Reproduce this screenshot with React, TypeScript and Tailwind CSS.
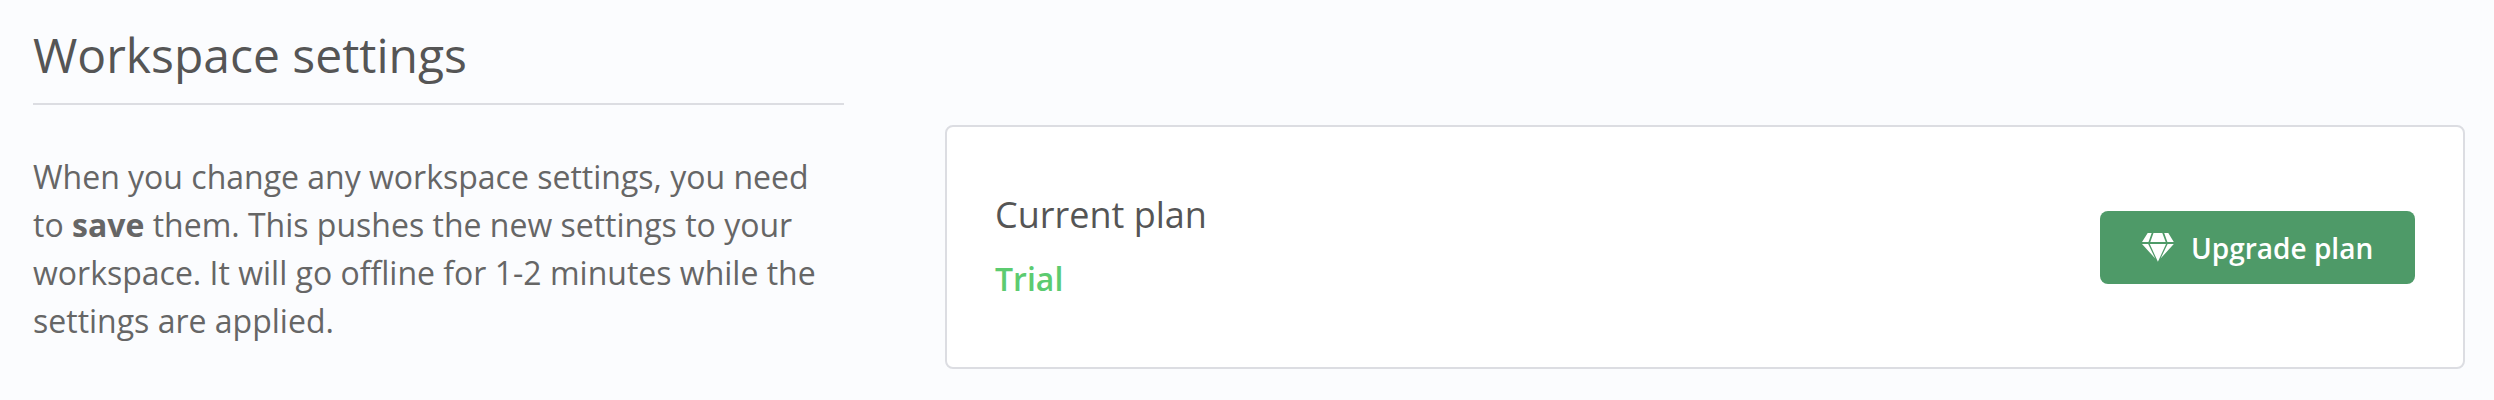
import React from 'react';

export default function App() {
  return (
    <div className="flex h-[400px] w-full items-start bg-[#fbfcfe] pl-[33px] font-['Open_Sans',sans-serif] text-[#666666]">
      <div className="w-[811px] pt-[19px]">
        <h1 className="h-[86px] border-b-2 border-[#dcdde2] text-[48px] leading-[72px] text-[#555555]">
          Workspace settings
        </h1>
        <p className="pt-12 text-[32px] leading-[48px]">
          When you change any workspace settings, you need
          <br />
          to <b>save</b> them. This pushes the new settings to your
          <br />
          workspace. It will go offline for 1-2 minutes while the
          <br />
          settings are applied.
        </p>
      </div>
      <div className="mt-[125px] ml-[101px] flex h-[244px] w-[1520px] items-start justify-between rounded-[8px] border-2 border-[#dcdde2] bg-white px-12">
        <div className="pt-[61px]">
          <div className="text-[36px] leading-[54px] text-[#555555]">
            Current plan
          </div>
          <div className="mt-[13px] text-[32px] leading-[48px] font-semibold text-[#5ccb70]">
            Trial
          </div>
        </div>
        <button className="mt-[84px] flex h-[73px] w-[315px] items-center rounded-[8px] bg-[#4e9a68] pl-[42px] text-[28px] font-semibold text-white">
          <svg
            className="mr-[17px] h-[29px] w-[32px]"
            viewBox="0 0 32 29"
            fill="currentColor"
          >
            <path d="M5.7 0h4L6.5 9H0zM11.5 0h8.8l3.4 9H8.3zM22.2 0h4.1l5.5 9h-6.4z" />
            <path d="M0 11h6.2l7 14.5zM7.8 11h16.2l-8.1 17.8zM25.6 11h6.2L18.6 25.5z" />
          </svg>
          Upgrade plan
        </button>
      </div>
    </div>
  );
}
